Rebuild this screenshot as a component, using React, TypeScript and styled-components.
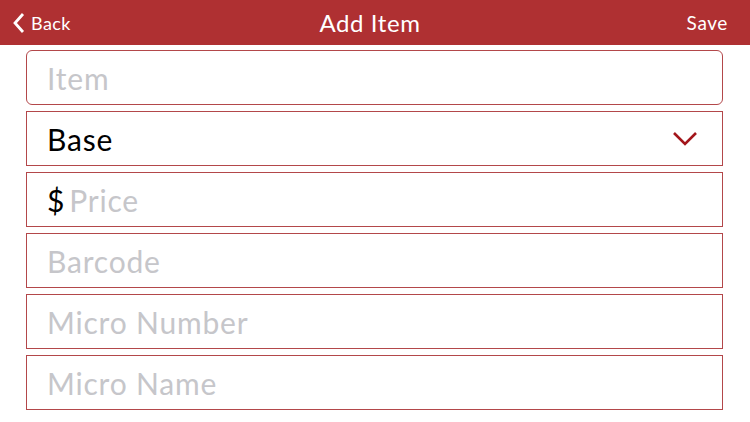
import React from "react";
import styled, { createGlobalStyle } from "styled-components";

const red = "#af3032";

const GlobalStyle = createGlobalStyle`
  html, body {
    margin: 0;
    padding: 0;
    background: #ffffff;
    font-family: Lato, "Open Sans", sans-serif;
  }
`;

const Page = styled.div`
  width: 750px;
  height: 422px;
  overflow: hidden;
  background: #fff;
`;

const NavBar = styled.header`
  height: 45px;
  background: ${red};
  color: #fff;
  display: grid;
  grid-template-columns: 1fr auto 1fr;
  align-items: center;
  padding: 0 22px 0 12px;
`;

const BackButton = styled.div`
  display: flex;
  align-items: center;
  gap: 5px;
  font-size: 18px;
  letter-spacing: 0.4px;
`;

const Title = styled.h1`
  margin: 0;
  font-size: 24px;
  font-weight: 400;
  letter-spacing: 0.6px;
  text-align: center;
`;

const SaveButton = styled.div`
  justify-self: end;
  font-size: 19px;
  letter-spacing: 0.6px;
`;

const Form = styled.div`
  display: flex;
  flex-direction: column;
  gap: 6px;
  padding: 5px 27px 0 26px;
`;

const Field = styled.div<{ $rounded?: boolean }>`
  height: 55px;
  box-sizing: border-box;
  border: 1px solid #b3474a;
  border-radius: ${(p) => (p.$rounded ? "6px" : "0")};
  display: flex;
  align-items: center;
  padding: 0 24px 0 20px;
  font-size: 30px;
  letter-spacing: 0.8px;
`;

const Placeholder = styled.span`
  color: #c6c6ca;
`;

const Value = styled.span`
  color: #000;
  flex: 1;
`;

const Currency = styled.span`
  color: #000;
  margin-right: 4px;
`;

const Chevron = () => (
  <svg width="26" height="16" viewBox="0 0 26 16">
    <path d="M2 2 L13 13 L24 2" fill="none" stroke="#a3161b" strokeWidth="2.6" />
  </svg>
);

const BackChevron = () => (
  <svg width="14" height="22" viewBox="0 0 14 22">
    <path d="M11 2 L3 11 L11 20" fill="none" stroke="#fff" strokeWidth="2.8" />
  </svg>
);

export default function App() {
  return (
    <Page>
      <GlobalStyle />
      <NavBar>
        <BackButton>
          <BackChevron />
          Back
        </BackButton>
        <Title>Add Item</Title>
        <SaveButton>Save</SaveButton>
      </NavBar>
      <Form>
        <Field $rounded>
          <Placeholder>Item</Placeholder>
        </Field>
        <Field>
          <Value>Base</Value>
          <Chevron />
        </Field>
        <Field>
          <Currency>$</Currency>
          <Placeholder>Price</Placeholder>
        </Field>
        <Field>
          <Placeholder>Barcode</Placeholder>
        </Field>
        <Field>
          <Placeholder>Micro Number</Placeholder>
        </Field>
        <Field>
          <Placeholder>Micro Name</Placeholder>
        </Field>
      </Form>
    </Page>
  );
}
